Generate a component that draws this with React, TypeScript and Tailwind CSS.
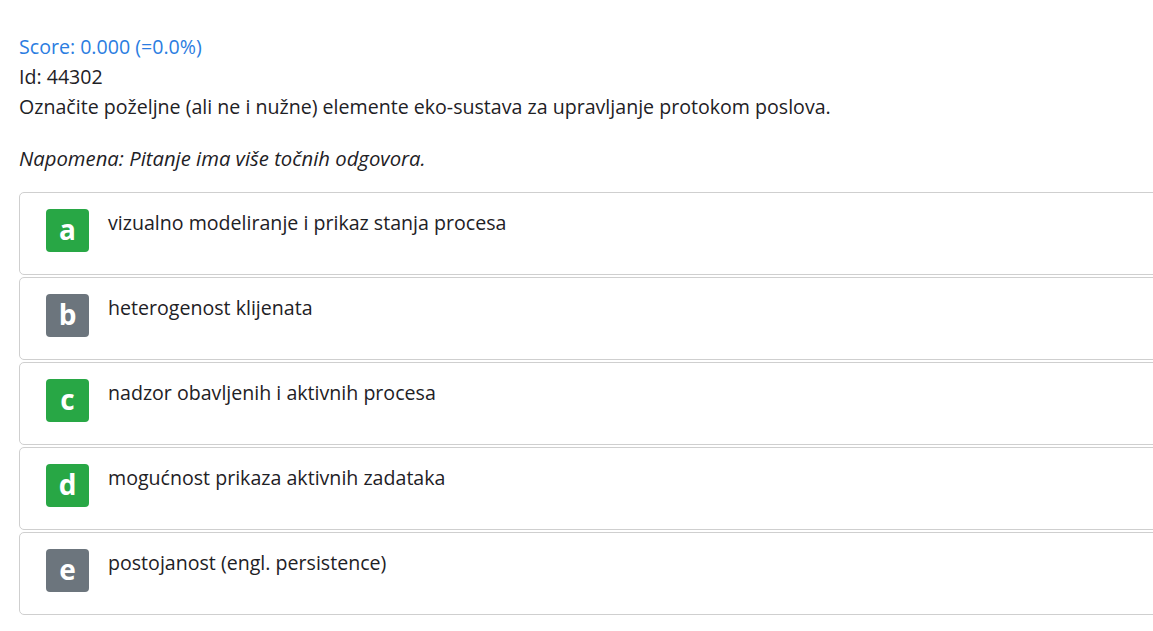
const answers = [
  { key: "a", text: "vizualno modeliranje i prikaz stanja procesa", correct: true },
  { key: "b", text: "heterogenost klijenata", correct: false },
  { key: "c", text: "nadzor obavljenih i aktivnih procesa", correct: true },
  { key: "d", text: "mogućnost prikaza aktivnih zadataka", correct: true },
  { key: "e", text: "postojanost (engl. persistence)", correct: false },
];

export default function App() {
  return (
    <div
      className="w-[1153px] h-[631px] overflow-hidden bg-white text-[#1e2125]"
      style={{ fontFamily: '"Open Sans", "Noto Sans", sans-serif' }}
    >
      <div className="pl-[19px] pt-[32px] w-[1200px]">
        <div className="text-[19.6px] leading-[30px] text-[#2b7de1]">Score: 0.000 (=0.0%)</div>
        <div className="text-[19.6px] leading-[30px]">Id: 44302</div>
        <div className="text-[19.6px] leading-[30px]">
          Označite poželjne (ali ne i nužne) elemente eko-sustava za upravljanje protokom poslova.
        </div>
        <div className="text-[20.3px] leading-[30px] italic mt-[21px] mb-[19px]">
          Napomena: Pitanje ima više točnih odgovora.
        </div>
        <div className="flex flex-col gap-[2px]">
          {answers.map((a) => (
            <div
              key={a.key}
              className="h-[83px] border border-[#cfcfcf] rounded-[5px] flex items-start pl-[26px] pt-[16px]"
            >
              <div
                className={`w-[43px] h-[43px] rounded-[4px] flex items-center justify-center text-white font-bold text-[28px] leading-none pb-[3px] ${
                  a.correct ? "bg-[#28a745]" : "bg-[#6c757d]"
                }`}
              >
                {a.key}
              </div>
              <div className="ml-[19px] text-[19.6px] leading-[30px] -mt-[1px]">{a.text}</div>
            </div>
          ))}
        </div>
      </div>
    </div>
  );
}
